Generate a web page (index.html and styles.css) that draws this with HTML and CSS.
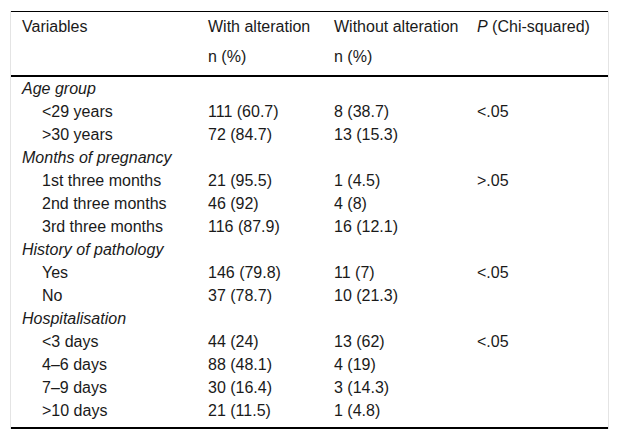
FILE: index.html
```html
<!DOCTYPE html>
<html>
<head>
<meta charset="utf-8">
<link rel="stylesheet" href="styles.css">
</head>
<body>
<div class="wrap">
<table class="tbl">
<colgroup><col class="c1"><col class="c2"><col class="c3"><col class="c4"></colgroup>
<thead>
<tr class="h1"><th>Variables</th><th>With alteration</th><th>Without alteration</th><th><i>P</i> (Chi-squared)</th></tr>
<tr class="h2"><th></th><th>n (%)</th><th>n (%)</th><th></th></tr>
</thead>
<tbody>
<tr><td class="cat">Age group</td><td></td><td></td><td></td></tr>
<tr><td class="ind">&lt;29 years</td><td>111 (60.7)</td><td>8 (38.7)</td><td>&lt;.05</td></tr>
<tr><td class="ind">&gt;30 years</td><td>72 (84.7)</td><td>13 (15.3)</td><td></td></tr>
<tr><td class="cat">Months of pregnancy</td><td></td><td></td><td></td></tr>
<tr><td class="ind">1st three months</td><td>21 (95.5)</td><td>1 (4.5)</td><td>&gt;.05</td></tr>
<tr><td class="ind">2nd three months</td><td>46 (92)</td><td>4 (8)</td><td></td></tr>
<tr><td class="ind">3rd three months</td><td>116 (87.9)</td><td>16 (12.1)</td><td></td></tr>
<tr><td class="cat">History of pathology</td><td></td><td></td><td></td></tr>
<tr><td class="ind">Yes</td><td>146 (79.8)</td><td>11 (7)</td><td>&lt;.05</td></tr>
<tr><td class="ind">No</td><td>37 (78.7)</td><td>10 (21.3)</td><td></td></tr>
<tr><td class="cat">Hospitalisation</td><td></td><td></td><td></td></tr>
<tr><td class="ind">&lt;3 days</td><td>44 (24)</td><td>13 (62)</td><td>&lt;.05</td></tr>
<tr><td class="ind">4–6 days</td><td>88 (48.1)</td><td>4 (19)</td><td></td></tr>
<tr><td class="ind">7–9 days</td><td>30 (16.4)</td><td>3 (14.3)</td><td></td></tr>
<tr class="last"><td class="ind">&gt;10 days</td><td>21 (11.5)</td><td>1 (4.8)</td><td></td></tr>
</tbody>
</table>
</div>
</body>
</html>
```
FILE: styles.css
```css
html, body {
  margin: 0;
  padding: 0;
  background: #fff;
}
body {
  font-family: "Liberation Sans", Arial, sans-serif;
  font-size: 16px;
  color: #1a1a1a;
}
.wrap {
  margin: 11px 0 0 10px;
  width: 597px;
  border-left: 1px solid #e4e4e4;
  border-right: 1px solid #e4e4e4;
}
.tbl {
  width: 597px;
  border-collapse: collapse;
  table-layout: fixed;
  border-top: 1px solid #000;
  border-bottom: 2px solid #000;
}
.c1 { width: 186px; }
.c2 { width: 126px; }
.c3 { width: 143px; }
.c4 { width: 142px; }
th {
  font-weight: normal;
  text-align: left;
  padding: 0 0 0 11px;
  height: 30px;
  line-height: 30px;
  vertical-align: middle;
  white-space: nowrap;
}
.h2 th {
  border-bottom: 2px solid #000;
  height: 33px;
  line-height: 30px;
  vertical-align: top;
}
td {
  padding: 0 0 0 11px;
  height: 23px;
  line-height: 23px;
  white-space: nowrap;
}
td.cat {
  font-style: italic;
}
td.ind {
  padding-left: 31px;
}
.last td {
  height: 28px;
  vertical-align: top;
}
```
